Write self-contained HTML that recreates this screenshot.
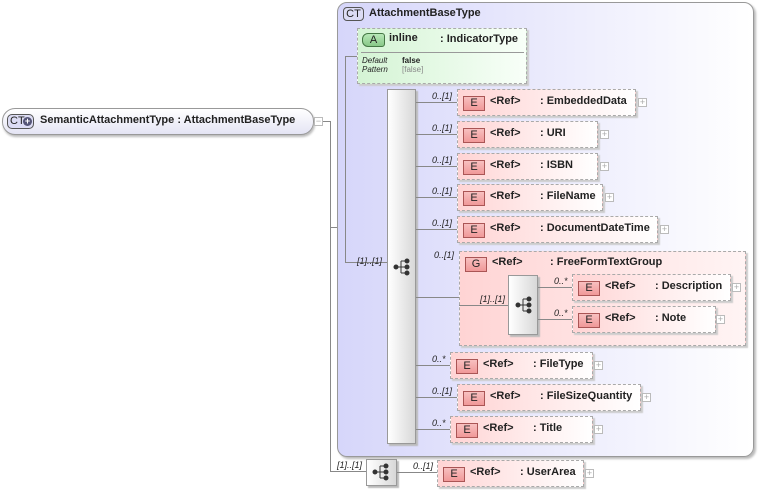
<!DOCTYPE html>
<html><head><meta charset="utf-8">
<style>
*{margin:0;padding:0;box-sizing:border-box}
body{width:760px;height:490px;background:#fff;position:relative;overflow:hidden;font-family:"Liberation Sans",Arial,sans-serif;font-size:11px;color:#222}
.a{position:absolute}
.hl{position:absolute;height:1px;background:#888}
.vl{position:absolute;width:1px;background:#888}
.el{position:absolute;height:27px;border:1px dashed #aaa;background:linear-gradient(to right,#ffd4d4,#fff);box-shadow:2px 2px 1px #ccc;font-weight:bold}
.badge{position:absolute;left:5px;top:6px;width:22px;height:15px;border:1px solid #a55;background:linear-gradient(#f8c0c0,#f09898);text-align:center;line-height:13px;font-weight:normal;font-size:11px;color:#222}
.ref{position:absolute;left:32px;top:5px}
.ty{position:absolute;top:5px;white-space:nowrap}
.pl{position:absolute;width:9px;height:9px;border:1px solid #bbb;background:#fff;color:#aaa;font-size:9px;line-height:7px;text-align:center;font-weight:normal}
.card{position:absolute;font-style:italic;font-size:9px;color:#222}
.seq{position:absolute;border:1px solid #999;background:linear-gradient(to right,#fff,#d8d8d8);box-shadow:2px 2px 1px #bbb}
</style></head><body>

<!-- left CT -->
<div class="a" style="left:2px;top:108px;width:312px;height:27px;border:1px solid #999;border-radius:13px;background:linear-gradient(#fff,#e4e4f4);box-shadow:1px 2px 2px #bbb"></div>
<div class="a" style="left:7px;top:114px;width:27px;height:15px;border:1px solid #555;border-radius:5px;background:#dcdcf4;font-size:11px;line-height:13px;padding-left:2px;white-space:nowrap">CT</div>
<div class="a" style="left:23px;top:117px;width:9px;height:9px;border-radius:50%;background:#557;color:#fff;font-size:9px;line-height:9px;text-align:center;font-weight:bold">+</div>
<div class="a" style="left:40px;top:114px;font-weight:bold;white-space:nowrap">SemanticAttachmentType : AttachmentBaseType</div>
<div class="pl" style="left:314px;top:117px">−</div>
<div class="hl" style="left:323px;top:121px;width:8px"></div>
<div class="vl" style="left:330px;top:121px;height:350px"></div>
<div class="hl" style="left:330px;top:227px;width:8px"></div>
<div class="hl" style="left:330px;top:471px;width:36px"></div>
<div class="card" style="left:337px;top:460px">[1]..[1]</div>

<!-- big CT -->
<div class="a" style="left:337px;top:2px;width:417px;height:455px;border:1px solid #999;border-radius:10px;background:linear-gradient(to right,#d6d6fa,#fff);box-shadow:2px 2px 2px #bbb"></div>
<div class="a" style="left:343px;top:7px;width:21px;height:14px;border:1px solid #555;border-radius:4px;background:#dcdcf4;line-height:12px;text-align:center">CT</div>
<div class="a" style="left:369px;top:7px;font-weight:bold">AttachmentBaseType</div>

<!-- attribute -->
<div class="a" style="left:357px;top:28px;width:170px;height:56px;border:1px dashed #aaa;background:linear-gradient(to right,#d4f4d4,#f8fff8);box-shadow:2px 2px 1px #ccc"></div>
<div class="a" style="left:362px;top:33px;width:23px;height:14px;border:1px solid #474;border-radius:6px 3px 3px 6px;background:linear-gradient(#b8e8b8,#88c888);text-align:center;line-height:12px">A</div>
<div class="a" style="left:389px;top:32px;font-weight:bold">inline</div>
<div class="a" style="left:440px;top:33px;font-weight:bold">: IndicatorType</div>
<div class="a" style="left:361px;top:52px;width:163px;height:1px;background:#999"></div>
<div class="a" style="left:362px;top:56px;font-size:8px;font-style:italic;line-height:9px">Default<br>Pattern</div>
<div class="a" style="left:402px;top:56px;font-size:8px;line-height:9px;font-weight:bold">false<br><span style="color:#888;font-weight:normal">[false]</span></div>
<div class="hl" style="left:345px;top:56px;width:12px"></div>
<div class="vl" style="left:345px;top:56px;height:206px"></div>
<div class="hl" style="left:345px;top:262px;width:42px"></div>
<div class="card" style="left:357px;top:256px">[1]..[1]</div>

<!-- main sequence -->
<div class="seq" style="left:387px;top:89px;width:29px;height:355px"></div>
<svg class="a" style="left:393px;top:258px" width="18" height="18" viewBox="0 0 18 18"><g stroke="#333" fill="#333"><line x1="3" y1="9" x2="8" y2="9"/><line x1="8" y1="3" x2="8" y2="15"/><line x1="8" y1="3" x2="14" y2="3"/><line x1="8" y1="9" x2="14" y2="9"/><line x1="8" y1="15" x2="14" y2="15"/><circle cx="3" cy="9" r="2"/><circle cx="14" cy="3" r="2"/><circle cx="14" cy="9" r="2"/><circle cx="14" cy="15" r="2"/></g></svg>

<!-- elements -->
<div class="hl" style="left:416px;top:102px;width:41px"></div><div class="card" style="left:432px;top:91px">0..[1]</div>
<div class="el" style="left:457px;top:89px;width:179px"><div class="badge">E</div><div class="ref">&lt;Ref&gt;</div><div class="ty" style="left:82px">: EmbeddedData</div></div><div class="pl" style="left:638px;top:98px">+</div>

<div class="hl" style="left:416px;top:134px;width:41px"></div><div class="card" style="left:432px;top:123px">0..[1]</div>
<div class="el" style="left:457px;top:121px;width:141px"><div class="badge">E</div><div class="ref">&lt;Ref&gt;</div><div class="ty" style="left:82px">: URI</div></div><div class="pl" style="left:600px;top:130px">+</div>

<div class="hl" style="left:416px;top:166px;width:41px"></div><div class="card" style="left:432px;top:155px">0..[1]</div>
<div class="el" style="left:457px;top:153px;width:141px"><div class="badge">E</div><div class="ref">&lt;Ref&gt;</div><div class="ty" style="left:82px">: ISBN</div></div><div class="pl" style="left:600px;top:162px">+</div>

<div class="hl" style="left:416px;top:197px;width:41px"></div><div class="card" style="left:432px;top:186px">0..[1]</div>
<div class="el" style="left:457px;top:184px;width:146px"><div class="badge">E</div><div class="ref">&lt;Ref&gt;</div><div class="ty" style="left:82px">: FileName</div></div><div class="pl" style="left:605px;top:193px">+</div>

<div class="hl" style="left:416px;top:229px;width:41px"></div><div class="card" style="left:432px;top:218px">0..[1]</div>
<div class="el" style="left:457px;top:216px;width:201px"><div class="badge">E</div><div class="ref">&lt;Ref&gt;</div><div class="ty" style="left:82px">: DocumentDateTime</div></div><div class="pl" style="left:660px;top:225px">+</div>

<!-- group -->
<div class="hl" style="left:416px;top:297px;width:43px"></div><div class="card" style="left:434px;top:250px">0..[1]</div>
<div class="el" style="left:459px;top:251px;width:287px;height:95px;background:linear-gradient(to right,#ffd4d4,#fff4f4)"><div class="badge" style="top:5px">G</div><div class="ref" style="top:4px">&lt;Ref&gt;</div><div class="ty" style="left:90px;top:4px">: FreeFormTextGroup</div></div>
<div class="hl" style="left:459px;top:305px;width:49px"></div><div class="card" style="left:480px;top:294px">[1]..[1]</div>
<div class="seq" style="left:508px;top:275px;width:30px;height:60px"></div>
<svg class="a" style="left:515px;top:296px" width="18" height="18" viewBox="0 0 18 18"><g stroke="#333" fill="#333"><line x1="3" y1="9" x2="8" y2="9"/><line x1="8" y1="3" x2="8" y2="15"/><line x1="8" y1="3" x2="14" y2="3"/><line x1="8" y1="9" x2="14" y2="9"/><line x1="8" y1="15" x2="14" y2="15"/><circle cx="3" cy="9" r="2"/><circle cx="14" cy="3" r="2"/><circle cx="14" cy="9" r="2"/><circle cx="14" cy="15" r="2"/></g></svg>
<div class="hl" style="left:538px;top:287px;width:34px"></div><div class="card" style="left:554px;top:276px">0..*</div>
<div class="el" style="left:572px;top:274px;width:159px;background:linear-gradient(to right,#ffd4d4,#fff)"><div class="badge">E</div><div class="ref">&lt;Ref&gt;</div><div class="ty" style="left:82px">: Description</div></div><div class="pl" style="left:732px;top:283px">+</div>
<div class="hl" style="left:538px;top:319px;width:34px"></div><div class="card" style="left:554px;top:308px">0..*</div>
<div class="el" style="left:572px;top:306px;width:144px;background:linear-gradient(to right,#ffd4d4,#fff)"><div class="badge">E</div><div class="ref">&lt;Ref&gt;</div><div class="ty" style="left:82px">: Note</div></div><div class="pl" style="left:716px;top:315px">+</div>

<div class="hl" style="left:416px;top:365px;width:34px"></div><div class="card" style="left:432px;top:354px">0..*</div>
<div class="el" style="left:450px;top:352px;width:143px"><div class="badge">E</div><div class="ref">&lt;Ref&gt;</div><div class="ty" style="left:82px">: FileType</div></div><div class="pl" style="left:594px;top:361px">+</div>

<div class="hl" style="left:416px;top:397px;width:41px"></div><div class="card" style="left:432px;top:386px">0..[1]</div>
<div class="el" style="left:457px;top:384px;width:184px"><div class="badge">E</div><div class="ref">&lt;Ref&gt;</div><div class="ty" style="left:82px">: FileSizeQuantity</div></div><div class="pl" style="left:642px;top:393px">+</div>

<div class="hl" style="left:416px;top:429px;width:34px"></div><div class="card" style="left:432px;top:418px">0..*</div>
<div class="el" style="left:450px;top:416px;width:143px"><div class="badge">E</div><div class="ref">&lt;Ref&gt;</div><div class="ty" style="left:82px">: Title</div></div><div class="pl" style="left:594px;top:425px">+</div>

<!-- bottom -->
<div class="seq" style="left:366px;top:459px;width:31px;height:27px"></div>
<svg class="a" style="left:372px;top:463px" width="18" height="18" viewBox="0 0 18 18"><g stroke="#333" fill="#333"><line x1="3" y1="9" x2="8" y2="9"/><line x1="8" y1="3" x2="8" y2="15"/><line x1="8" y1="3" x2="14" y2="3"/><line x1="8" y1="9" x2="14" y2="9"/><line x1="8" y1="15" x2="14" y2="15"/><circle cx="3" cy="9" r="2"/><circle cx="14" cy="3" r="2"/><circle cx="14" cy="9" r="2"/><circle cx="14" cy="15" r="2"/></g></svg>
<div class="hl" style="left:397px;top:472px;width:40px"></div><div class="card" style="left:413px;top:461px">0..[1]</div>
<div class="el" style="left:437px;top:460px;width:147px"><div class="badge">E</div><div class="ref">&lt;Ref&gt;</div><div class="ty" style="left:82px">: UserArea</div></div><div class="pl" style="left:585px;top:469px">+</div>

</body></html>
